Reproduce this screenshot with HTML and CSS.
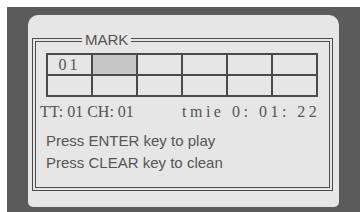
FILE: index.html
```html
<!DOCTYPE html>
<html lang="en">
<head>
    <meta charset="UTF-8">
    <meta name="viewport" content="width=device-width, initial-scale=1.0">
    <title>Mark</title>
    <link rel="stylesheet" href="styles.css">
</head>
<body>

    <div class="device">
        <div class="panel">
            <div class="frame">
                <span class="legend">MARK</span>
                <div class="frame-inner">
                    <div class="cells">
                        <div class="cell">01</div>
                        <div class="cell on"></div>
                        <div class="cell"></div>
                        <div class="cell"></div>
                        <div class="cell"></div>
                        <div class="cell"></div>
                        <div class="cell"></div>
                        <div class="cell"></div>
                        <div class="cell"></div>
                        <div class="cell"></div>
                        <div class="cell"></div>
                        <div class="cell"></div>
                    </div>
                    <div class="status">
                        <span class="track">TT: 01 CH: 01</span>
                        <span class="time">tmie 0: 01: 22</span>
                    </div>
                    <div class="hint">
                        <p>Press ENTER key to play</p>
                        <p>Press CLEAR key to clean</p>
                    </div>
                </div>
            </div>
        </div>
    </div>

</body>
</html>
```

FILE: styles.css
```css
body {
    margin: 0;
    background: #fff;
    font-family: "Liberation Sans", Arial, sans-serif;
}

.device {
    margin: 7px 0 0 7px;
    height: 205px;
    padding: 8px 21px 0 21px;
    box-sizing: border-box;
    background: #5b5b5b;
}

.panel {
    height: 192px;
    padding: 23px 6px 0 4px;
    box-sizing: border-box;
    background: #e6e6e6;
    border-radius: 10px 10px 5px 5px;
}

.frame {
    position: relative;
    height: 153px;
    padding: 2px;
    box-sizing: border-box;
    border: 1px solid #4c4c4c;
}

    .frame .legend {
        position: absolute;
        top: -7px;
        left: 49px;
        padding: 0 3px;
        background: #e6e6e6;
        color: #555;
        font-size: 15px;
        line-height: 15px;
    }

.frame-inner {
    height: 100%;
    padding: 11px 0 0 4px;
    box-sizing: border-box;
    border: 1px solid #4c4c4c;
}

.cells {
    display: grid;
    grid-template-columns: repeat(6, 43px);
    grid-auto-rows: 19px;
    gap: 2px;
    width: max-content;
    margin-left: 6px;
    padding: 2px;
    background: #4a4a4a;
}

    .cells .cell {
        background: #e6e6e6;
        color: #555;
        font-family: "Liberation Serif", "Times New Roman", serif;
        font-size: 16px;
        line-height: 19px;
        letter-spacing: 3px;
        text-align: center;
    }

    .cells .cell.on {
        background: #c6c6c6;
    }

.status {
    display: flex;
    margin-top: 5px;
    color: #555;
    font-family: "Liberation Serif", "Times New Roman", serif;
    font-size: 16px;
    line-height: 20px;
    white-space: pre;
}

    .status .track {
        width: 142px;
    }

    .status .time {
        letter-spacing: 3.5px;
    }

.hint {
    margin-top: 8px;
    padding-left: 6px;
    color: #555;
    font-size: 15px;
    line-height: 22px;
}

    .hint p {
        margin: 0;
    }
```
